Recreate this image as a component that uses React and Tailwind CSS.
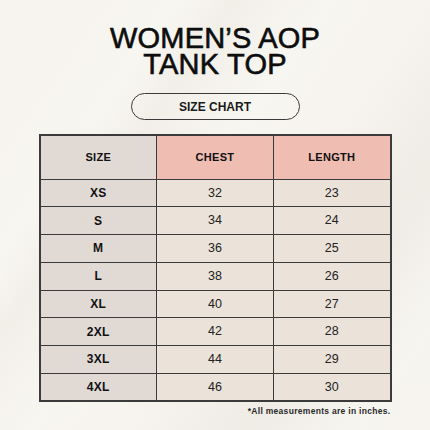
const rows = [
  ["XS", "32", "23"],
  ["S", "34", "24"],
  ["M", "36", "25"],
  ["L", "38", "26"],
  ["XL", "40", "27"],
  ["2XL", "42", "28"],
  ["3XL", "44", "29"],
  ["4XL", "46", "30"],
];

export default function App() {
  return (
    <div
      className="w-[430px] h-[430px] overflow-hidden flex flex-col items-center"
      style={{
        fontFamily: '"Liberation Sans", Arial, sans-serif',
        background:
          "linear-gradient(125deg, #f6f3ed 0%, #f8f6f1 25%, #f2efe9 32%, #f8f6f1 45%, #f6f3ee 60%, #efece6 75%, #f7f5f0 90%, #f6f3ed 100%)",
      }}
    >
      <h1 className="pt-[25px] text-center text-[29px] leading-[26px] tracking-[0.2px] text-[#0d0d0d] font-normal [-webkit-text-stroke:0.6px_#0d0d0d]">
        <div>WOMEN’S AOP</div>
        <div>TANK TOP</div>
      </h1>
      <div className="mt-[16px] w-[169px] h-[27px] rounded-full border-[1.5px] border-[#3a3a3a] flex items-center justify-center text-[12px] font-bold text-[#1a1a1a]">
        SIZE CHART
      </div>
      <table className="mt-[14px] border-collapse border-[2px] border-[#3b3b3b] w-[351px] table-fixed">
        <thead>
          <tr className="h-[44px]">
            <th className="w-[117px] bg-[#e1d9d4] border-[1.5px] border-[#3b3b3b] text-[11px] font-bold tracking-[0.3px] text-[#111]">SIZE</th>
            <th className="w-[117px] bg-[#efbdb1] border-[1.5px] border-[#3b3b3b] text-[11px] font-bold tracking-[0.3px] text-[#111]">CHEST</th>
            <th className="w-[117px] bg-[#efbdb1] border-[1.5px] border-[#3b3b3b] text-[11px] font-bold tracking-[0.3px] text-[#111]">LENGTH</th>
          </tr>
        </thead>
        <tbody>
          {rows.map((r) => (
            <tr key={r[0]} className="h-[27.75px]">
              <td className="bg-[#e1d9d4] border-[1.5px] border-[#3b3b3b] text-center text-[12px] font-bold tracking-[0.3px] text-[#111]">{r[0]}</td>
              <td className="bg-[#ebe3d9] border-[1.5px] border-[#3b3b3b] text-center text-[12.5px] text-[#222]">{r[1]}</td>
              <td className="bg-[#ebe3d9] border-[1.5px] border-[#3b3b3b] text-center text-[12.5px] text-[#222]">{r[2]}</td>
            </tr>
          ))}
        </tbody>
      </table>
      <div className="w-[351px] text-right mt-[3px] text-[8.5px] font-bold tracking-[0.3px] text-[#2a2a2a]">
        *All measurements are in inches.
      </div>
    </div>
  );
}
